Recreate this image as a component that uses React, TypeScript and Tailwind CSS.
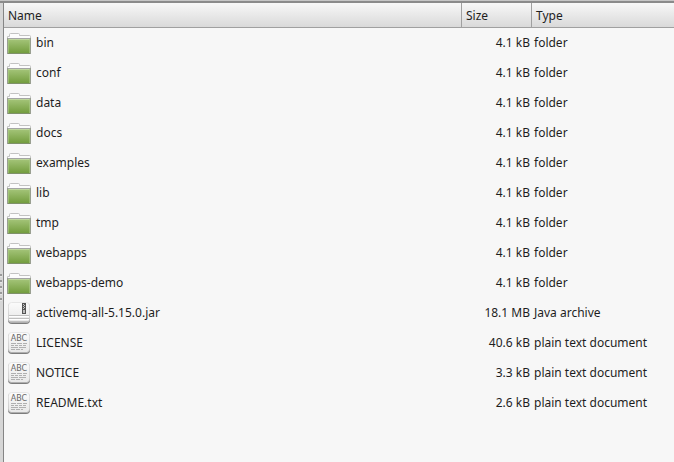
type Kind = "folder" | "jar" | "text";

interface Entry {
  name: string;
  size: string;
  type: string;
  kind: Kind;
}

const folder = (name: string): Entry => ({ name, size: "4.1 kB", type: "folder", kind: "folder" });

const entries: Entry[] = [
  folder("bin"),
  folder("conf"),
  folder("data"),
  folder("docs"),
  folder("examples"),
  folder("lib"),
  folder("tmp"),
  folder("webapps"),
  folder("webapps-demo"),
  { name: "activemq-all-5.15.0.jar", size: "18.1 MB", type: "Java archive", kind: "jar" },
  { name: "LICENSE", size: "40.6 kB", type: "plain text document", kind: "text" },
  { name: "NOTICE", size: "3.3 kB", type: "plain text document", kind: "text" },
  { name: "README.txt", size: "2.6 kB", type: "plain text document", kind: "text" },
];

function SharedGradients() {
  return (
    <svg className="absolute size-0" aria-hidden="true">
      <defs>
        <linearGradient id="folderFill" x1="0" y1="0" x2="0" y2="1">
          <stop offset="0" stopColor="#a6c67c" />
          <stop offset="1" stopColor="#729c3c" />
        </linearGradient>
        <linearGradient id="paperFill" x1="0" y1="0" x2="0" y2="1">
          <stop offset="0" stopColor="#fbfbfb" />
          <stop offset="1" stopColor="#e8e8e8" />
        </linearGradient>
        <linearGradient id="paperEdge" x1="0" y1="0" x2="0" y2="1">
          <stop offset="0" stopColor="#e6e6e6" />
          <stop offset="0.8" stopColor="#cfcfcf" />
          <stop offset="1" stopColor="#b0b0b0" />
        </linearGradient>
      </defs>
    </svg>
  );
}

function FolderIcon() {
  return (
    <svg viewBox="0 0 24 24" className="size-6 shrink-0" aria-hidden="true">
      <path d="M0.5 9V5.5H2.5V3.5Q2.5 2.5 3.5 2.5H11.5Q12.5 2.5 12.5 3.5V4.5H22.5Q23.5 4.5 23.5 5.5V9Z" fill="#fcfcfc" stroke="#c2c2c2" />
      <rect x="0.5" y="7.5" width="23" height="15" fill="url(#folderFill)" stroke="#999f90" />
      <path d="M1 7.5H23" stroke="#a5a5a5" />
      <path d="M1.5 8.5H22.5" stroke="#bdd79b" />
      <path d="M1.5 9V22M22.5 9V22" stroke="#aac987" strokeOpacity="0.6" />
      <path d="M1 22.5H23" stroke="#7f906a" />
    </svg>
  );
}

function Paper() {
  return (
    <>
      <rect x="1" y="2" width="22" height="21" rx="4" fill="#7c7c7c" />
      <rect x="1.5" y="1.5" width="21" height="20" rx="3" fill="url(#paperFill)" stroke="url(#paperEdge)" />
    </>
  );
}

function JarIcon() {
  return (
    <svg viewBox="0 0 24 24" className="size-6 shrink-0" aria-hidden="true">
      <Paper />
      <path d="M2 14.5H22M2 17.5H22M2 20.5H22" stroke="#c0c0c0" />
      <path d="M2 15.5H22M2 18.5H22" stroke="#ffffff" />
      <rect x="15" y="2" width="4" height="11" fill="#555555" />
      <path d="M16 3.5H17M17 4.5H18M16 5.5H17M17 6.5H18M16 7.5H17" stroke="#c8c8c8" />
      <rect x="16" y="9" width="2" height="3" fill="#bdbdbd" />
    </svg>
  );
}

function TextIcon() {
  return (
    <svg viewBox="0 0 24 24" className="size-6 shrink-0" aria-hidden="true">
      <Paper />
      <text x="12" y="10" textAnchor="middle" fontSize="8" fill="#666666" className="font-['DejaVu_Sans',sans-serif]">
        ABC
      </text>
      <g stroke="#b0b0b0">
        <path d="M4 12.5H20" strokeDasharray="5 1" />
        <path d="M4 14.5H20" strokeDasharray="3 1" />
        <path d="M4 16.5H20" strokeDasharray="7 1" />
        <path d="M4 18.5H16" strokeDasharray="4 1" />
      </g>
    </svg>
  );
}

function EntryIcon({ kind }: { kind: Kind }) {
  if (kind === "folder") return <FolderIcon />;
  if (kind === "jar") return <JarIcon />;
  return <TextIcon />;
}

function Splitter() {
  return (
    <div className="flex w-1 shrink-0 flex-col border-r border-[#858585] bg-[#d6d6d6] pt-[271px]">
      <div className="flex flex-col gap-[3px]">
        {[0, 1, 2, 3, 4].map((n) => (
          <div key={n} className="h-[3px] w-[2px] border-b border-[#e6e6e6] bg-[#999999]" />
        ))}
      </div>
    </div>
  );
}

export default function App() {
  return (
    <div className="flex min-h-screen flex-col bg-[#f7f7f7] font-['Noto_Sans',sans-serif] text-xs text-[#1e1e1e]">
      <SharedGradients />
      <div className="h-[3px] border-b-2 border-[#8b8b8b] bg-[#c6c6c6]" />
      <div className="flex grow">
        <Splitter />
        <main className="min-w-0 grow">
          <table className="w-full table-fixed border-separate border-spacing-0">
            <thead>
              <tr className="h-[25px] bg-linear-to-b from-[#f8f8f8] to-[#d8d8d8] text-left">
                <th className="border-r border-b border-[#a0a0a0] px-1 pt-[2px] font-normal">Name</th>
                <th className="w-[70px] border-r border-b border-[#a0a0a0] px-1 pt-[2px] font-normal">Size</th>
                <th className="w-[142px] border-b border-[#a0a0a0] px-1 pt-[2px] font-normal">Type</th>
              </tr>
            </thead>
            <tbody>
              {entries.map((entry) => (
                <tr key={entry.name} className="h-[30px]">
                  <td className="p-0">
                    <div className="flex items-center gap-[5px] pl-[3px]">
                      <EntryIcon kind={entry.kind} />
                      <span>{entry.name}</span>
                    </div>
                  </td>
                  <td className="p-0 pr-[2px] text-right whitespace-nowrap">{entry.size}</td>
                  <td className="p-0 pl-[2px] whitespace-nowrap">{entry.type}</td>
                </tr>
              ))}
            </tbody>
          </table>
        </main>
      </div>
    </div>
  );
}
